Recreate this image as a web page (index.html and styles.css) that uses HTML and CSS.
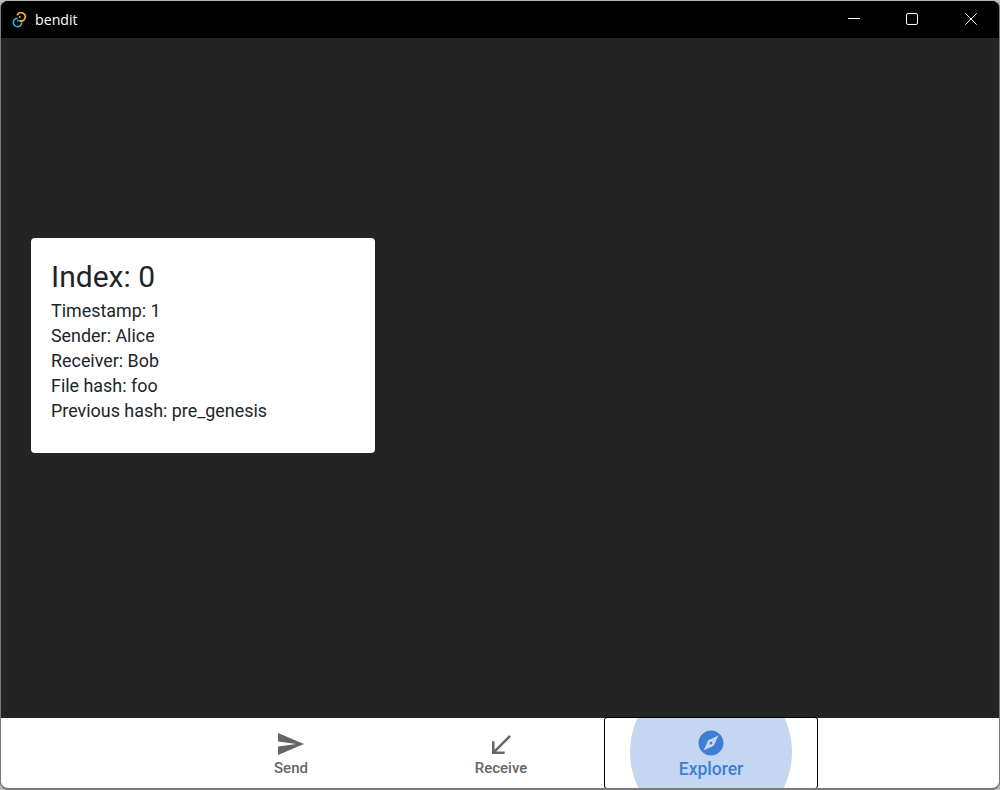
FILE: index.html
```html
<!DOCTYPE html>
<html lang="en">
<head>
<meta charset="utf-8">
<title>bendit</title>
<link rel="stylesheet" href="styles.css">
</head>
<body>
<div class="window">
  <header class="titlebar">
    <svg class="app-icon" width="16" height="16" viewBox="0 0 16 16" fill="none" stroke-width="1.7" stroke-linecap="round">
      <path d="M5.4 2.7A4.2 4.2 0 1 1 8 8.9" stroke="#f0b429"/>
      <path d="M9.7 10.8A4.2 4.2 0 1 1 5 6.3" stroke="#29b6d6"/>
      <circle cx="7.8" cy="5" r="1" fill="#f0b429"/>
      <circle cx="6" cy="8.8" r="1" fill="#29b6d6"/>
    </svg>
    <span class="app-title">bendit</span>
    <div class="controls">
      <button class="control"><svg width="12" height="12" viewBox="0 0 12 12"><path d="M0 5.5H12" stroke="#fff" fill="none"/></svg></button>
      <button class="control"><svg width="12" height="12" viewBox="0 0 12 12"><rect x=".5" y=".5" width="11" height="11" rx="1.5" stroke="#fff" fill="none"/></svg></button>
      <button class="control"><svg width="12" height="12" viewBox="0 0 12 12"><path d="M.3 .3L11.7 11.7M11.7 .3L.3 11.7" stroke="#fff" fill="none"/></svg></button>
    </div>
  </header>
  <main class="content">
    <section class="card">
      <h1 class="card-title">Index: 0</h1>
      <p class="row">Timestamp: 1</p>
      <p class="row">Sender: Alice</p>
      <p class="row">Receiver: Bob</p>
      <p class="row">File hash: foo</p>
      <p class="row">Previous hash: pre_genesis</p>
    </section>
  </main>
  <nav class="nav">
    <div class="tab">
      <span class="icon-slot"><svg width="26" height="22" viewBox="0 0 24 24" preserveAspectRatio="none"><path d="M0 24L24 12L0 0V9.3L17 12L0 14.7Z" fill="#666"/></svg></span>
      <span class="tab-label">Send</span>
    </div>
    <div class="tab">
      <span class="icon-slot"><svg width="19" height="19" viewBox="5 4 15 15"><path d="M20 5.41L18.59 4L7 15.59V9H5V19H15V17H8.41Z" fill="#666"/></svg></span>
      <span class="tab-label">Receive</span>
    </div>
    <div class="tab tab-active">
      <span class="ripple"></span>
      <span class="icon-slot"><svg width="30" height="30" viewBox="0 0 24 24"><path d="M12 2C6.48 2 2 6.48 2 12s4.48 10 10 10 10-4.48 10-10S17.52 2 12 2zm2.19 12.19L6 18l3.81-8.19L18 6l-3.81 8.19z" fill="#3f7ed6"/><circle cx="12" cy="12" r="1.1" fill="#3f7ed6"/></svg></span>
      <span class="tab-label">Explorer</span>
    </div>
  </nav>
</div>
</body>
</html>
```
FILE: styles.css
```css
* { box-sizing: border-box; }
html, body { margin: 0; height: 100%; background: #bdbdbd; }
body { font-family: Roboto, "Liberation Sans", sans-serif; }
.window {
  height: 790px;
  display: flex;
  flex-direction: column;
  border: 1px solid #7a7a7a;
  border-top-color: #b5b5b5;
  border-bottom-width: 2px;
  border-radius: 8px;
  overflow: hidden;
  background: #242424;
}
.titlebar {
  height: 37px;
  flex: none;
  background: #000;
  display: flex;
  align-items: center;
  padding-left: 11px;
  color: #fff;
}
.app-icon { flex: none; }
.app-title { margin-left: 7px; font: 14.2px "Open Sans", "Noto Sans", sans-serif; }
.controls { margin-left: auto; margin-right: -1px; display: flex; }
.control {
  width: 58.5px;
  height: 37px;
  background: none;
  border: 0;
  padding: 0 0 1px;
  display: flex;
  align-items: center;
  justify-content: center;
}
.content {
  flex: 1;
  background: #242424;
  display: flex;
  align-items: center;
  padding: 0 30px 65px;
}
.card {
  width: 344px;
  height: 215px;
  background: #fff;
  border-radius: 4px;
  padding: 20px;
  color: #212529;
}
.card-title { margin: 0 0 2px; font-size: 30px; font-weight: 400; line-height: 38px; }
.row { margin: 0; font-size: 17.9px; line-height: 25px; }
.nav {
  height: 70px;
  flex: none;
  background: #fff;
  display: flex;
  justify-content: center;
  padding-left: 2px;
}
.tab {
  position: relative;
  width: 210px;
  overflow: hidden;
  display: flex;
  flex-direction: column;
  align-items: center;
  padding-top: 14px;
  color: #666;
}
.icon-slot {
  position: relative;
  height: 24px;
  display: flex;
  align-items: center;
  justify-content: center;
}
.tab-label { position: relative; font-size: 15px; font-weight: 500; line-height: 16px; margin-top: 4px; }
.tab-active {
  color: #3f7ed6;
  width: 214px;
  margin: -1px -2px 0;
  height: 72px;
  border: 1px solid #000;
  border-radius: 3px;
  padding-top: 13px;
}
.tab-active .tab-label { font-size: 17.5px; line-height: 22px; margin-top: 3px; }
.ripple {
  position: absolute;
  left: 25px;
  top: -47px;
  width: 162px;
  height: 162px;
  border-radius: 50%;
  background: #c5d6f2;
}
```
